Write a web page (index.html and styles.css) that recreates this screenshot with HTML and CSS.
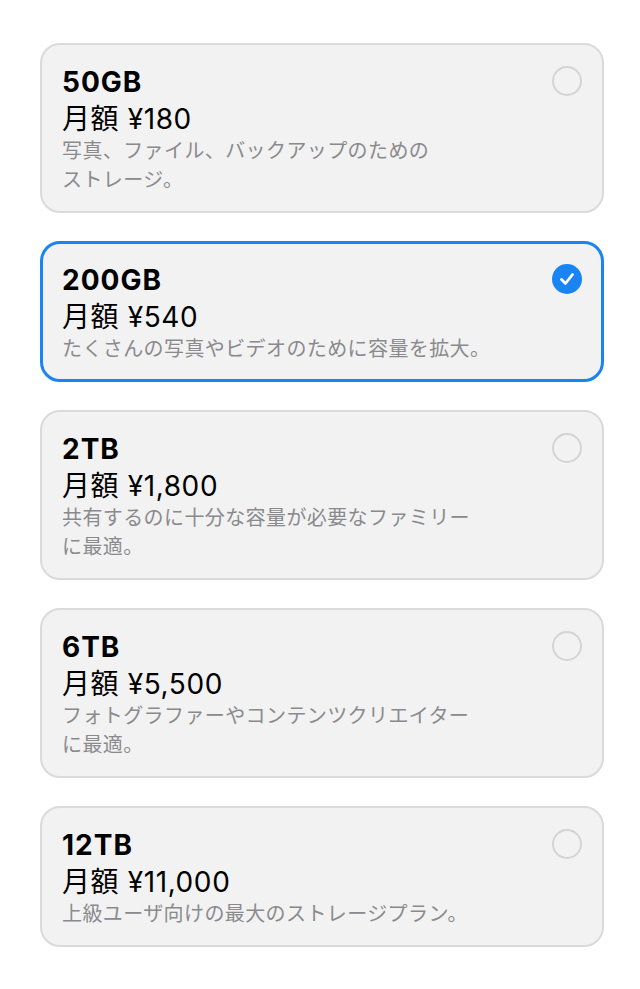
FILE: index.html
```html
<!DOCTYPE html>
<html lang="ja">
<head>
    <meta charset="UTF-8">
    <meta name="viewport" content="width=device-width, initial-scale=1.0">
    <title>ストレージプラン</title>
    <link rel="stylesheet" href="styles.css">
</head>
<body>
    <div class="plans">
        <div class="plan">
            <div class="info">
                <div class="size">50GB</div>
                <div class="price">月額 ¥180</div>
                <div class="desc">写真、ファイル、バックアップのための<br>ストレージ。</div>
            </div>
            <span class="radio"></span>
        </div>

        <div class="plan selected">
            <div class="info">
                <div class="size">200GB</div>
                <div class="price">月額 ¥540</div>
                <div class="desc">たくさんの写真やビデオのために容量を拡大。</div>
            </div>
            <span class="radio">
                <svg viewBox="0 0 30 30" width="30" height="30">
                    <path d="M9.5 15.5 L13.5 19.5 L20.5 10.5" fill="none" stroke="#fff" stroke-width="2.8" stroke-linecap="round" stroke-linejoin="round"/>
                </svg>
            </span>
        </div>

        <div class="plan">
            <div class="info">
                <div class="size">2TB</div>
                <div class="price">月額 ¥1,800</div>
                <div class="desc">共有するのに十分な容量が必要なファミリー<br>に最適。</div>
            </div>
            <span class="radio"></span>
        </div>

        <div class="plan">
            <div class="info">
                <div class="size">6TB</div>
                <div class="price">月額 ¥5,500</div>
                <div class="desc">フォトグラファーやコンテンツクリエイター<br>に最適。</div>
            </div>
            <span class="radio"></span>
        </div>

        <div class="plan">
            <div class="info">
                <div class="size">12TB</div>
                <div class="price">月額 ¥11,000</div>
                <div class="desc">上級ユーザ向けの最大のストレージプラン。</div>
            </div>
            <span class="radio"></span>
        </div>
    </div>
</body>
</html>
```

FILE: styles.css
```css
body {
    margin: 0;
    background: #fff;
    font-family: Inter, "Noto Sans CJK JP", sans-serif;
    color: #000;
}

.plans {
    display: flex;
    flex-direction: column;
    gap: 28px;
    padding: 43px 36px 0 40px;
}

.plan {
    display: flex;
    justify-content: space-between;
    align-items: flex-start;
    padding: 20px 20px 18px 20px;
    background: #f2f2f2;
    border: 2px solid #dadada;
    border-radius: 20px;
}

.plan.selected {
    padding: 19px 19px 17px 19px;
    border: 3px solid #1a84f5;
}

.size {
    font-size: 28px;
    font-weight: 700;
    line-height: 34px;
    letter-spacing: 1px;
}

.price {
    padding-top: 4px;
    font-size: 28px;
    line-height: 32px;
    letter-spacing: 0.6px;
}

.desc {
    font-family: "Noto Sans CJK JP", sans-serif;
    font-size: 20px;
    line-height: 29px;
    letter-spacing: 0.4px;
    color: #8a8a8e;
}

.radio {
    box-sizing: border-box;
    width: 30px;
    height: 30px;
    margin-top: 1px;
    border: 2px solid #d4d4d6;
    border-radius: 50%;
    flex-shrink: 0;
}

.selected .radio {
    border: none;
    background: #1a84f5;
}

.radio svg {
    display: block;
}
```
